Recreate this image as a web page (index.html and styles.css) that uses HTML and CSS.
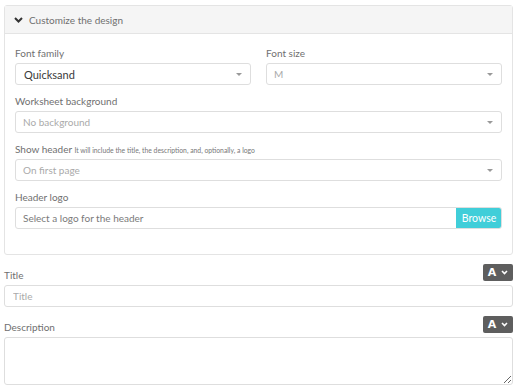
FILE: index.html
```html
<!DOCTYPE html>
<html>
<head>
<meta charset="utf-8">
<link rel="stylesheet" href="styles.css">
</head>
<body>
<div class="panel">
  <div class="panel-head">
    <svg class="chev" width="9" height="6" viewBox="0 0 9 6"><path d="M1 1 L4.5 4.5 L8 1" fill="none" stroke="#333" stroke-width="2"/></svg>
    <span>Customize the design</span>
  </div>
  <div class="panel-body">
    <div class="row2">
      <div class="group">
        <div class="label">Font family</div>
        <div class="select dark big"><span>Quicksand</span><i class="caret"></i></div>
      </div>
      <div class="group">
        <div class="label">Font size</div>
        <div class="select"><span>M</span><i class="caret"></i></div>
      </div>
    </div>
    <div class="group">
      <div class="label">Worksheet background</div>
      <div class="select"><span>No background</span><i class="caret"></i></div>
    </div>
    <div class="group">
      <div class="label">Show header <small>It will include the title, the description, and, optionally, a logo</small></div>
      <div class="select"><span>On first page</span><i class="caret"></i></div>
    </div>
    <div class="group last">
      <div class="label">Header logo</div>
      <div class="filebox"><span>Select a logo for the header</span><button class="browse">Browse</button></div>
    </div>
  </div>
</div>

<div class="field">
  <div class="field-head">
    <div class="label">Title</div>
    <button class="abtn"><b>A</b><svg width="7" height="5" viewBox="0 0 7 5"><path d="M1 1 L3.5 3.5 L6 1" fill="none" stroke="#fff" stroke-width="1.6"/></svg></button>
  </div>
  <input class="input" placeholder="Title">
</div>
<div class="field">
  <div class="field-head">
    <div class="label">Description</div>
    <button class="abtn"><b>A</b><svg width="7" height="5" viewBox="0 0 7 5"><path d="M1 1 L3.5 3.5 L6 1" fill="none" stroke="#fff" stroke-width="1.6"/></svg></button>
  </div>
  <textarea class="textarea"></textarea>
</div>
</body>
</html>
```
FILE: styles.css
```css
* { box-sizing: border-box; }
body {
  margin: 0;
  padding: 5px 5px 0 4px;
  font-family: "Lato", "Open Sans", sans-serif;
  font-size: 10px;
  color: #707070;
  background: #fff;
}
.panel {
  border: 1px solid #e4e4e4;
  border-radius: 3px;
}
.panel-head {
  height: 28px;
  background: #f5f5f5;
  border-bottom: 1px solid #e4e4e4;
  display: flex;
  align-items: center;
  padding-left: 9px;
  gap: 6px;
  font-size: 10px;
  color: #707070;
}
.chev { display: block; }
.panel-body {
  padding: 12px 10px 25px 10px;
}
.row2 {
  display: grid;
  grid-template-columns: 1fr 1fr;
  gap: 15px;
}
.group { margin-bottom: 9px; }
.group.last { margin-bottom: 0; }
.label {
  line-height: 14px;
  height: 14px;
  margin-bottom: 3px;
  color: #707070;
  white-space: nowrap;
}
.label small { font-size: 6.8px; color: #777; }
.select {
  height: 22px;
  border: 1px solid #dedede;
  border-radius: 3px;
  display: flex;
  align-items: center;
  justify-content: space-between;
  padding: 0 8px 0 7px;
  color: #aaa;
}
.select.big { font-size: 11px; color: #3a3a3a; padding-left: 8px; }
.caret {
  width: 0; height: 0;
  border-left: 3px solid transparent;
  border-right: 3px solid transparent;
  border-top: 3px solid #999;
}
.filebox {
  height: 22px;
  border: 1px solid #dedede;
  border-radius: 3px;
  display: flex;
  align-items: center;
  justify-content: space-between;
  padding-left: 7px;
  color: #7a7a7a;
  overflow: hidden;
}
.browse {
  height: 22px;
  margin: -1px -1px -1px 0;
  width: 46px;
  border: none;
  background: #40ced9;
  color: #fff;
  font-family: "Lato", sans-serif;
  font-size: 10.5px;
  border-radius: 0 3px 3px 0;
  padding: 0;
}
.field { margin-top: 9px; }
.field-head {
  display: flex;
  justify-content: space-between;
  align-items: center;
  height: 17px;
  margin-bottom: 4px;
}
.field-head .label { margin: 4px 0 0 0; }
.abtn {
  width: 30px;
  height: 17px;
  background: #5e5e5e;
  border: none;
  border-radius: 2px;
  display: flex;
  align-items: center;
  justify-content: center;
  gap: 5px;
  padding: 0;
  color: #fff;
}
.abtn b { font-family: "DejaVu Sans", sans-serif; font-size: 11px; font-weight: bold; }
.input {
  display: block;
  width: 100%;
  height: 22px;
  border: 1px solid #dedede;
  border-radius: 3px;
  padding: 0 8px;
  font-family: "Lato", sans-serif;
  font-size: 10px;
  outline: none;
}
.input::placeholder { color: #aaa; }
.textarea {
  display: block;
  width: 100%;
  height: 48px;
  border: 1px solid #dedede;
  border-radius: 3px;
  resize: vertical;
}
```
